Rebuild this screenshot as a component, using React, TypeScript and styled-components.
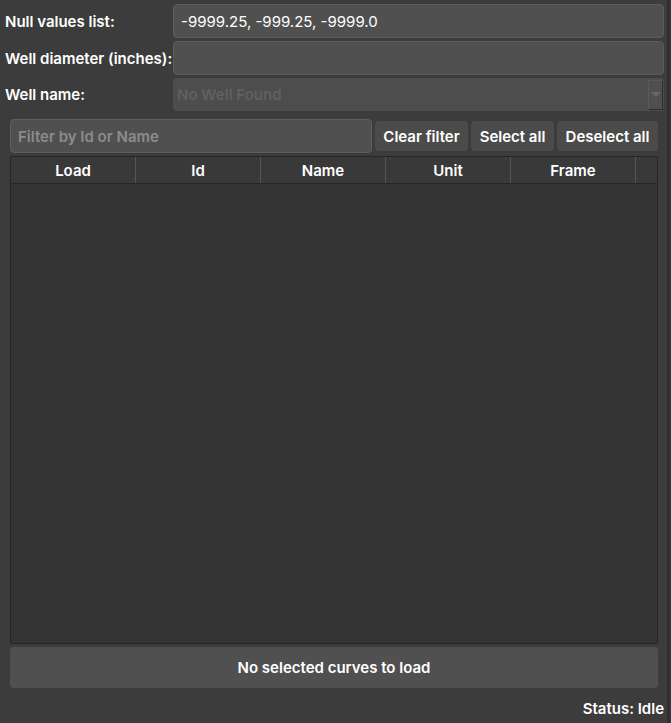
import React, { useState } from "react";
import styled, { createGlobalStyle } from "styled-components";

const GlobalStyle = createGlobalStyle`
  html, body {
    margin: 0;
    padding: 0;
    background: #3c3c3c;
  }
  body {
    font-family: Inter, "Noto Sans", sans-serif;
    color: #ffffff;
  }
`;

const Window = styled.div`
  display: flex;
  width: 671px;
  height: 723px;
  box-sizing: border-box;
`;

const Panel = styled.div`
  width: 667px;
  height: 723px;
  box-sizing: border-box;
  padding: 4px 3px 0 5px;
  display: flex;
  flex-direction: column;
  background: #3c3c3c;
`;

const Splitter = styled.div`
  width: 3px;
  background: #303030;
`;

const Form = styled.div`
  display: grid;
  grid-template-columns: 168px 1fr;
  row-gap: 3px;
  align-items: center;
`;

const Label = styled.label`
  font-size: 15px;
  font-weight: 600;
  color: #ffffff;
  white-space: nowrap;
`;

const TextInput = styled.input`
  height: 34px;
  box-sizing: border-box;
  background: #505050;
  border: 1px solid #5c5c5c;
  border-radius: 4px;
  color: #ffffff;
  font-family: inherit;
  font-size: 15px;
  padding: 0 7px;
  outline: none;

  &::placeholder {
    color: #8c8c8c;
    font-weight: 600;
  }
`;

const Combo = styled.div`
  height: 33px;
  box-sizing: border-box;
  background: #4d4d4d;
  border-radius: 4px;
  display: flex;
  align-items: center;
  justify-content: space-between;
  padding-left: 4px;
  color: #606060;
  font-size: 15px;
  font-weight: 600;
  margin-top: 0;
`;

const ComboArrow = styled.div`
  width: 15px;
  height: 30px;
  box-sizing: border-box;
  border: 1px solid #5a5a5a;
  border-right-color: #2c2c2c;
  border-bottom-color: #2c2c2c;
  background: #4f4f4f;
  display: flex;
  align-items: center;
  justify-content: center;
  margin-right: 1px;

  &::after {
    content: "";
    border-left: 5px solid transparent;
    border-right: 5px solid transparent;
    border-top: 5px solid #686868;
  }
`;

const FilterRow = styled.div`
  display: flex;
  align-items: center;
  gap: 3px;
  margin: 8px 0 0 5px;
  width: 648px;
`;

const FilterInput = styled(TextInput)`
  width: 362px;
  border-color: #5e5e5e;
`;

const ToolButton = styled.button<{ $w: number }>`
  width: ${(p) => p.$w}px;
  height: 30px;
  background: #4b4b4b;
  border: none;
  border-radius: 4px;
  color: #ffffff;
  font-family: inherit;
  font-size: 15px;
  font-weight: 600;
  padding: 0;
`;

const Table = styled.div`
  margin: 3px 0 0 5px;
  width: 648px;
  height: 488px;
  box-sizing: border-box;
  border: 1px solid #262626;
  background: #333333;
  display: flex;
  flex-direction: column;
`;

const HeaderRow = styled.div`
  display: grid;
  grid-template-columns: repeat(5, 125px) 1fr;
  height: 26px;
  background: #393939;
  border-bottom: 1px solid #262626;
`;

const HeaderCell = styled.div`
  display: flex;
  align-items: center;
  justify-content: center;
  font-size: 15px;
  font-weight: 600;
  color: #ffffff;
  border-right: 1px solid #555555;
  box-sizing: border-box;

  &:last-child {
    border-right: none;
  }
`;

const LoadButton = styled.button`
  margin: 3px 0 0 5px;
  width: 648px;
  height: 41px;
  background: #505050;
  border: none;
  border-radius: 4px;
  color: #ffffff;
  font-family: inherit;
  font-size: 15px;
  font-weight: 600;
`;

const StatusBar = styled.div`
  display: flex;
  justify-content: flex-end;
  margin-top: 11px;
  padding-right: 0;
  font-size: 15px;
  font-weight: 600;
  color: #ffffff;
`;

const columns = ["Load", "Id", "Name", "Unit", "Frame", ""];

export default function App() {
  const [nulls, setNulls] = useState("-9999.25, -999.25, -9999.0");
  const [diameter, setDiameter] = useState("");
  const [filter, setFilter] = useState("");

  return (
    <>
      <GlobalStyle />
      <Window>
        <Panel>
          <Form>
            <Label>Null values list:</Label>
            <TextInput value={nulls} onChange={(e) => setNulls(e.target.value)} />
            <Label>Well diameter (inches):</Label>
            <TextInput value={diameter} onChange={(e) => setDiameter(e.target.value)} />
            <Label>Well name:</Label>
            <Combo>
              No Well Found
              <ComboArrow />
            </Combo>
          </Form>
          <FilterRow>
            <FilterInput
              placeholder="Filter by Id or Name"
              value={filter}
              onChange={(e) => setFilter(e.target.value)}
            />
            <ToolButton $w={93}>Clear filter</ToolButton>
            <ToolButton $w={83}>Select all</ToolButton>
            <ToolButton $w={101}>Deselect all</ToolButton>
          </FilterRow>
          <Table>
            <HeaderRow>
              {columns.map((c, i) => (
                <HeaderCell key={i}>{c}</HeaderCell>
              ))}
            </HeaderRow>
          </Table>
          <LoadButton>No selected curves to load</LoadButton>
          <StatusBar>Status: Idle</StatusBar>
        </Panel>
        <Splitter />
      </Window>
    </>
  );
}
